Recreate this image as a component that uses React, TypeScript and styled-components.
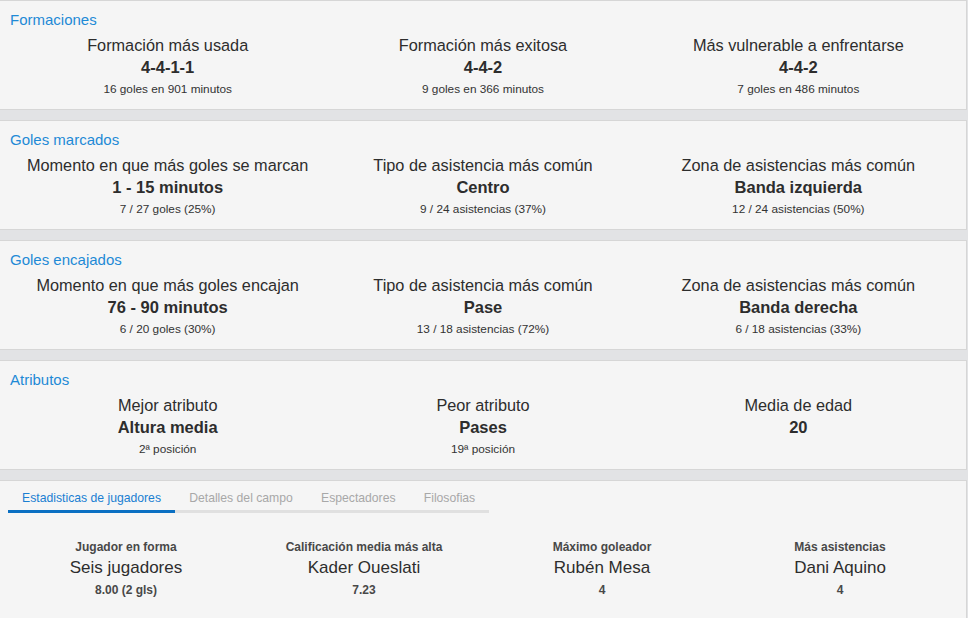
import styled, { createGlobalStyle } from 'styled-components';

const GlobalStyle = createGlobalStyle`
  html, body {
    margin: 0;
    padding: 0;
    background: #e2e3e5;
    font-family: "Liberation Sans", Arial, Helvetica, sans-serif;
    color: #333;
  }
`;

const Page = styled.div`
  display: flex;
  flex-direction: column;
  gap: 10px;
  width: 968px;
`;

const Card = styled.section`
  background: #f5f5f5;
  border: 1px solid #d6d6d6;
  border-left: none;
  width: 966px;
`;

const SummaryCard = styled(Card)`
  padding: 9px 0 9px;
`;

const Title = styled.h2`
  margin: 0;
  padding-left: 10px;
  font-size: 15px;
  font-weight: normal;
  line-height: 20px;
  color: #1e8ad6;
`;

const Row = styled.div<{ $cols: number }>`
  display: grid;
  grid-template-columns: repeat(${p => p.$cols}, 1fr);
  padding: 0 10px;
  margin-top: 4px;
`;

const Stat = styled.div`
  display: flex;
  flex-direction: column;
  align-items: center;
  text-align: center;
`;

const Label = styled.div`
  font-size: 16.3px;
  line-height: 22px;
  color: #2d2d2d;
`;

const Value = styled.div`
  font-size: 16.5px;
  font-weight: bold;
  line-height: 22px;
  color: #2d2d2d;
`;

const Sub = styled.div`
  font-size: 11.8px;
  line-height: 22px;
  min-height: 22px;
  color: #333;
`;

const PlayersCard = styled(Card)`
  padding: 10px 0 18px;
  flex: 1;
`;

const Tabs = styled.div`
  display: flex;
  width: fit-content;
  margin-left: 8px;
  border-bottom: 3px solid #e0e0e0;
`;

const Tab = styled.div<{ $active?: boolean }>`
  font-size: 12.2px;
  line-height: 14px;
  padding: 0 14.1px 5px;
  margin-bottom: -3px;
  border-bottom: 3px solid ${p => (p.$active ? '#0a6fc2' : 'transparent')};
  color: ${p => (p.$active ? '#1a7fd2' : '#a8a8a8')};
  white-space: nowrap;
`;

const PlayerRow = styled.div`
  display: grid;
  grid-template-columns: repeat(4, 1fr);
  padding: 0 7px;
  margin-top: 24px;
`;

const PlayerLabel = styled.div`
  font-size: 12px;
  font-weight: bold;
  line-height: 20px;
  color: #484848;
`;

const PlayerName = styled.div`
  font-size: 17px;
  line-height: 22px;
  color: #2d2d2d;
`;

const PlayerValue = styled.div`
  font-size: 12px;
  font-weight: bold;
  line-height: 22px;
  color: #484848;
`;

type Item = { label: string; value: string; sub?: string };

const sections: { title: string; items: Item[] }[] = [
  {
    title: 'Formaciones',
    items: [
      { label: 'Formación más usada', value: '4-4-1-1', sub: '16 goles en 901 minutos' },
      { label: 'Formación más exitosa', value: '4-4-2', sub: '9 goles en 366 minutos' },
      { label: 'Más vulnerable a enfrentarse', value: '4-4-2', sub: '7 goles en 486 minutos' },
    ],
  },
  {
    title: 'Goles marcados',
    items: [
      { label: 'Momento en que más goles se marcan', value: '1 - 15 minutos', sub: '7 / 27 goles (25%)' },
      { label: 'Tipo de asistencia más común', value: 'Centro', sub: '9 / 24 asistencias (37%)' },
      { label: 'Zona de asistencias más común', value: 'Banda izquierda', sub: '12 / 24 asistencias (50%)' },
    ],
  },
  {
    title: 'Goles encajados',
    items: [
      { label: 'Momento en que más goles encajan', value: '76 - 90 minutos', sub: '6 / 20 goles (30%)' },
      { label: 'Tipo de asistencia más común', value: 'Pase', sub: '13 / 18 asistencias (72%)' },
      { label: 'Zona de asistencias más común', value: 'Banda derecha', sub: '6 / 18 asistencias (33%)' },
    ],
  },
  {
    title: 'Atributos',
    items: [
      { label: 'Mejor atributo', value: 'Altura media', sub: '2ª posición' },
      { label: 'Peor atributo', value: 'Pases', sub: '19ª posición' },
      { label: 'Media de edad', value: '20' },
    ],
  },
];

const tabs = ['Estadisticas de jugadores', 'Detalles del campo', 'Espectadores', 'Filosofias'];

const players = [
  { label: 'Jugador en forma', name: 'Seis jugadores', value: '8.00 (2 gls)' },
  { label: 'Calificación media más alta', name: 'Kader Oueslati', value: '7.23' },
  { label: 'Máximo goleador', name: 'Rubén Mesa', value: '4' },
  { label: 'Más asistencias', name: 'Dani Aquino', value: '4' },
];

export default function App() {
  return (
    <>
      <GlobalStyle />
      <Page>
        {sections.map(s => (
          <SummaryCard key={s.title}>
            <Title>{s.title}</Title>
            <Row $cols={3}>
              {s.items.map((it, i) => (
                <Stat key={i}>
                  <Label>{it.label}</Label>
                  <Value>{it.value}</Value>
                  <Sub>{it.sub}</Sub>
                </Stat>
              ))}
            </Row>
          </SummaryCard>
        ))}

        <PlayersCard>
          <Tabs>
            {tabs.map((t, i) => (
              <Tab key={t} $active={i === 0}>{t}</Tab>
            ))}
          </Tabs>
          <PlayerRow>
            {players.map(p => (
              <Stat key={p.label}>
                <PlayerLabel>{p.label}</PlayerLabel>
                <PlayerName>{p.name}</PlayerName>
                <PlayerValue>{p.value}</PlayerValue>
              </Stat>
            ))}
          </PlayerRow>
        </PlayersCard>
      </Page>
    </>
  );
}
